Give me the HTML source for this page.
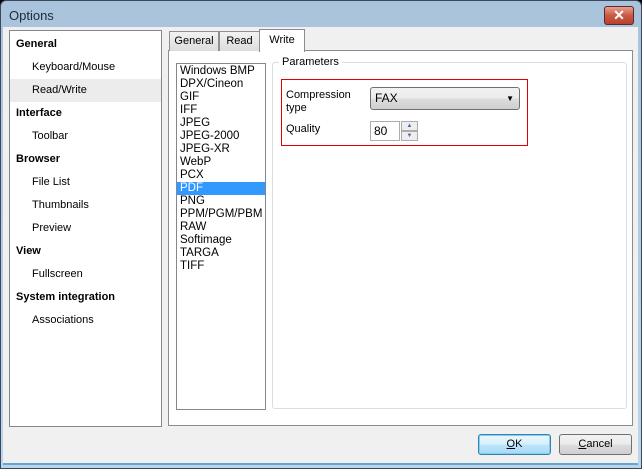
<!DOCTYPE html>
<html><head><style>
*{margin:0;padding:0;box-sizing:border-box}
body{width:642px;height:469px;overflow:hidden;font-family:"Liberation Sans",Tahoma,sans-serif;font-size:11px;color:#000;background:#000}
.win{position:absolute;left:0;top:0;width:642px;height:469px;background:linear-gradient(#a9c3dc,#bcd5ec);border:1px solid #3a4a5a;border-radius:6px 6px 0 0}
.title{position:absolute;left:8px;top:7px;font-size:13px;color:#1e2a36}
.close{position:absolute;left:603px;top:5px;width:30px;height:19px;border:1px solid #5a2a2a;border-radius:3px;background:linear-gradient(#e8a090,#c85a44 50%,#b8402c);color:#fff;font-weight:bold;font-size:14px;text-align:center;line-height:17px}
.client{position:absolute;left:3px;top:27px;width:635px;height:438px;background:#f0f0f0;border-bottom:2px solid #60a8d0}
.abs{position:absolute}
.tree{left:9px;top:30px;width:153px;height:397px;background:#fff;border:1px solid #828790}
.tree div{position:absolute;left:0;width:151px;height:23px;line-height:23px;font-size:11px}
.b{font-weight:bold;padding-left:6px}
.s{padding-left:22px}
.tab{border:1px solid #8e8f8f;border-bottom:none;background:linear-gradient(#f2f2f2,#dcdcdc);height:20px;line-height:19px;text-align:center}
.panel{left:168px;top:50px;width:465px;height:376px;background:#fff;border:1px solid #898c95}
.list{left:176px;top:63px;width:90px;height:347px;border:1px solid #828790;background:#fff}
.list div{height:13px;line-height:13px;padding-left:3px;font-size:11.5px}
.sel{background:#3399ff;color:#fff}
.grp{left:272px;top:62px;width:355px;height:347px;border:1px solid #d5dfe5;border-radius:3px}
.btn{height:21px;border:1px solid #707070;border-radius:3px;background:linear-gradient(#f2f2f2,#ebebeb 50%,#dddddd 51%,#cfcfcf);text-align:center;line-height:19px}
</style></head><body>
<div class="win">
<div class="title">Options</div>
<div class="close">✕</div>
</div>
<div class="client"></div>
<div class="abs tree">
<div class="b" style="top:2px">General</div>
<div class="s" style="top:25px">Keyboard/Mouse</div>
<div class="s" style="top:48px;background:#ececec">Read/Write</div>
<div class="b" style="top:71px">Interface</div>
<div class="s" style="top:94px">Toolbar</div>
<div class="b" style="top:117px">Browser</div>
<div class="s" style="top:140px">File List</div>
<div class="s" style="top:163px">Thumbnails</div>
<div class="s" style="top:186px">Preview</div>
<div class="b" style="top:209px">View</div>
<div class="s" style="top:232px">Fullscreen</div>
<div class="b" style="top:255px">System integration</div>
<div class="s" style="top:278px">Associations</div>
</div>
<div class="abs panel"></div>
<div class="abs tab" style="left:169px;top:31px;width:50px">General</div>
<div class="abs tab" style="left:219px;top:31px;width:41px">Read</div>
<div class="abs tab" style="left:259px;top:29px;width:46px;height:23px;background:#fff;border-color:#898c95;line-height:20px">Write</div>
<div class="abs list">
<div style="margin-top:1px">Windows BMP</div><div>DPX/Cineon</div><div>GIF</div><div>IFF</div><div>JPEG</div><div>JPEG-2000</div><div>JPEG-XR</div><div>WebP</div><div>PCX</div><div class="sel">PDF</div><div>PNG</div><div>PPM/PGM/PBM</div><div>RAW</div><div>Softimage</div><div>TARGA</div><div>TIFF</div>
</div>
<div class="abs grp"></div>
<div class="abs" style="left:279px;top:56px;background:#fff;padding:0 3px">Parameters</div>
<div class="abs" style="left:281px;top:79px;width:247px;height:67px;background:#e00000"></div>
<div class="abs" style="left:282px;top:80px;width:245px;height:65px;background:#fff"></div>
<div class="abs" style="left:286px;top:89px;line-height:13px">Compression<br>type</div>
<div class="abs" style="left:286px;top:123px">Quality</div>
<div class="abs btn" style="left:370px;top:87px;width:150px;height:23px;text-align:left;padding-left:4px;line-height:21px;font-size:12px">FAX<span style="position:absolute;right:5px;top:0;font-size:8px">▼</span></div>
<div class="abs" style="left:370px;top:121px;width:30px;height:20px;border:1px solid #abadb3;background:#fff;padding-left:3px;line-height:18px;font-size:12px">80</div>
<div class="abs" style="left:401px;top:121px;width:17px;height:10px;border:1px solid #acacac;background:#eee;font-size:6px;text-align:center;line-height:8px;color:#4a6a9a">▲</div>
<div class="abs" style="left:401px;top:131px;width:17px;height:10px;border:1px solid #acacac;background:#eee;font-size:6px;text-align:center;line-height:8px;color:#4a6a9a">▼</div>
<div class="abs btn" style="left:478px;top:434px;width:73px;border-color:#3c7fb1;box-shadow:inset 0 0 0 1px #7fd0f0;background:linear-gradient(#eaf6fd,#d9f0fc 50%,#bee6fd 51%,#a7d9f5)"><u>O</u>K</div>
<div class="abs btn" style="left:559px;top:434px;width:73px"><u>C</u>ancel</div>
</body></html>
